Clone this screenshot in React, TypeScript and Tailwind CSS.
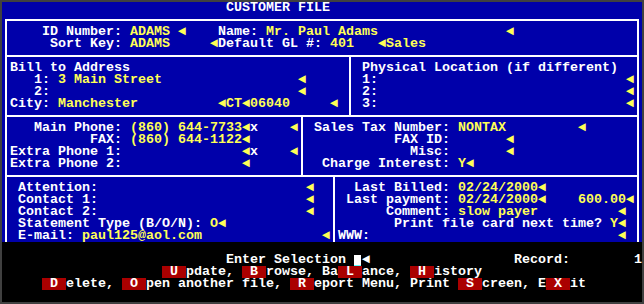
import React from "react";

type Kind = "w" | "y" | "r" | "c";
type Seg = [number, string, Kind];

const kindClass: Record<Kind, string> = {
  w: "text-white",
  y: "text-[#ffff55]",
  r: "bg-[#aa0000] text-white",
  c: "",
};

function Row({ segs }: { segs: Seg[] }) {
  let pos = 0;
  const out: React.ReactNode[] = [];
  segs.forEach(([col, t, k], i) => {
    if (col > pos) {
      out.push(
        <span key={"g" + i} className="inline-block shrink-0" style={{ width: (col - pos) * 8 }} />
      );
    }
    const w = k === "c" ? 1 : t.length;
    if (k === "c") {
      out.push(
        <span key={i} className="flex w-[8px] shrink-0 flex-col pt-[1px]">
          <span className="block h-[10px] w-[7px] bg-white" />
          <span className="block h-[1px] w-[7px] bg-[#55ffff]" />
        </span>
      );
    } else {
      out.push(
        <span
          key={i}
          className={"inline-block shrink-0 overflow-visible whitespace-pre " + kindClass[k]}
          style={{ width: w * 8 }}
        >
          {t}
        </span>
      );
    }
    pos = col + w;
  });
  return <div className="flex h-[12px] whitespace-pre leading-[12px]">{out}</div>;
}

const A = "\u25C4";

const blueRows: Seg[][] = [
  [[28, "CUSTOMER FILE", "w"]],
  [],
  [
    [5, "ID Number: ", "w"],
    [16, "ADAMS", "y"],
    [22, A, "y"],
    [27, "Name: ", "w"],
    [33, "Mr. Paul Adams", "y"],
    [63, A, "y"],
  ],
  [
    [6, "Sort Key: ", "w"],
    [16, "ADAMS", "y"],
    [26, A, "y"],
    [27, "Default GL #: ", "w"],
    [41, "401", "y"],
    [47, A, "y"],
    [48, "Sales", "y"],
  ],
  [],
  [
    [1, "Bill to Address", "w"],
    [45, "Physical Location (if different)", "w"],
  ],
  [
    [4, "1: ", "w"],
    [7, "3 Main Street", "y"],
    [37, A, "y"],
    [45, "1:", "w"],
    [78, A, "y"],
  ],
  [
    [4, "2:", "w"],
    [37, A, "y"],
    [45, "2:", "w"],
    [78, A, "y"],
  ],
  [
    [1, "City: ", "w"],
    [7, "Manchester", "y"],
    [27, A, "y"],
    [28, "CT", "y"],
    [30, A, "y"],
    [31, "06040", "y"],
    [41, A, "y"],
    [45, "3:", "w"],
    [78, A, "y"],
  ],
  [],
  [
    [4, "Main Phone: ", "w"],
    [16, "(860) 644-7733", "y"],
    [30, A, "y"],
    [31, "x", "w"],
    [36, A, "y"],
    [39, "Sales Tax Number: ", "w"],
    [57, "NONTAX", "y"],
    [72, A, "y"],
  ],
  [
    [11, "FAX: ", "w"],
    [16, "(860) 644-1122", "y"],
    [30, A, "y"],
    [49, "FAX ID: ", "w"],
    [63, A, "y"],
  ],
  [
    [1, "Extra Phone 1: ", "w"],
    [30, A, "y"],
    [31, "x", "w"],
    [36, A, "y"],
    [51, "Misc: ", "w"],
    [63, A, "y"],
  ],
  [
    [1, "Extra Phone 2: ", "w"],
    [30, A, "y"],
    [40, "Charge Interest: ", "w"],
    [57, "Y", "y"],
    [58, A, "y"],
  ],
  [],
  [
    [2, "Attention:", "w"],
    [38, A, "y"],
    [44, "Last Billed: ", "w"],
    [57, "02/24/2000", "y"],
    [67, A, "y"],
  ],
  [
    [2, "Contact 1:", "w"],
    [38, A, "y"],
    [43, "Last payment: ", "w"],
    [57, "02/24/2000", "y"],
    [67, A, "y"],
    [72, "600.00", "y"],
    [78, A, "y"],
  ],
  [
    [2, "Contact 2:", "w"],
    [38, A, "y"],
    [48, "Comment: ", "w"],
    [57, "slow payer", "y"],
    [77, A, "y"],
  ],
  [
    [2, "Statement Type (B/O/N): ", "w"],
    [26, "O", "y"],
    [27, A, "y"],
    [49, "Print file card next time? ", "w"],
    [76, "Y", "y"],
    [77, A, "y"],
  ],
  [
    [2, "E-mail: ", "w"],
    [10, "paul125@aol.com", "y"],
    [40, A, "y"],
    [42, "WWW:", "w"],
    [77, A, "y"],
  ],
];

const blackRows: Seg[][] = [
  [],
  [
    [28, "Enter Selection ", "w"],
    [44, "", "c"],
    [45, A, "w"],
    [64, "Record:", "w"],
    [79, "1", "w"],
  ],
  [
    [20, " U ", "r"],
    [23, "pdate, ", "w"],
    [30, " B ", "r"],
    [33, "rowse, Ba", "w"],
    [42, " L ", "r"],
    [45, "ance, ", "w"],
    [51, " H ", "r"],
    [54, "istory", "w"],
  ],
  [
    [5, " D ", "r"],
    [8, "elete, ", "w"],
    [15, " O ", "r"],
    [18, "pen another file, ", "w"],
    [36, " R ", "r"],
    [39, "eport Menu, Print ", "w"],
    [57, " S ", "r"],
    [60, "creen, E", "w"],
    [68, " X ", "r"],
    [71, "it", "w"],
  ],
  [],
];

export default function App() {
  return (
    <div className="h-[304px] w-[644px] bg-[#404040] p-[2px]">
      <div className="flex h-[300px] w-[640px] flex-col bg-black font-['Liberation_Mono','DejaVu_Sans_Mono',monospace] text-[13.333px] font-bold leading-[12px]">
        <div className="grid h-[240px] grid-cols-[repeat(80,8px)] grid-rows-[repeat(20,12px)] bg-[#0000aa]">
          <div className="col-start-1 col-end-81 row-start-2 row-end-6 m-[5px_3px] border-2 border-white" />
          <div className="col-start-1 col-end-45 row-start-5 row-end-11 m-[5px_3px] border-2 border-white" />
          <div className="col-start-44 col-end-81 row-start-5 row-end-11 m-[5px_3px] border-2 border-white" />
          <div className="col-start-1 col-end-39 row-start-10 row-end-16 m-[5px_3px] border-2 border-white" />
          <div className="col-start-38 col-end-81 row-start-10 row-end-16 m-[5px_3px] border-2 border-white" />
          <div className="col-start-1 col-end-43 row-start-15 row-end-21 mx-[3px] mt-[5px] border-2 border-b-0 border-white" />
          <div className="col-start-42 col-end-81 row-start-15 row-end-21 mx-[3px] mt-[5px] border-2 border-b-0 border-white" />
          <div className="col-start-1 col-end-81 row-start-1 row-end-21 flex flex-col">
            {blueRows.map((r, i) => (
              <Row key={i} segs={r} />
            ))}
          </div>
        </div>
        <div className="flex h-[60px] flex-col">
          {blackRows.map((r, i) => (
            <Row key={i} segs={r} />
          ))}
        </div>
      </div>
    </div>
  );
}
